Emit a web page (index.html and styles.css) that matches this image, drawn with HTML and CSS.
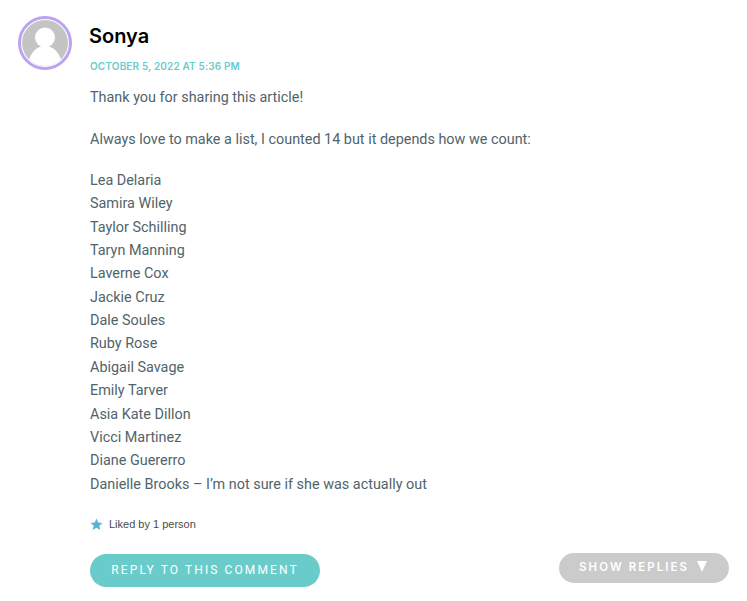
FILE: index.html
```html
<!DOCTYPE html>
<html lang="en">
<head>
<meta charset="utf-8">
<title>Comment</title>
<link rel="stylesheet" href="styles.css">
</head>
<body>
<article class="comment">
  <header class="head">
    <div class="avatar">
      <svg viewBox="0 0 46 46" width="46" height="46" aria-hidden="true">
        <circle cx="23" cy="23" r="23" fill="#c4c4c4"/>
        <circle cx="23" cy="17.5" r="10" fill="#fff"/>
        <path d="M7 39.5c3-8 8-13.5 16-13.5s13 5.500 16 13.500a23 23 0 0 1-32 0z" fill="#fff"/>
      </svg>
    </div>
    <div class="meta">
      <div class="name">Sonya</div>
      <div class="date">OCTOBER 5, 2022 AT 5:36 PM</div>
    </div>
  </header>
  <div class="body">
    <p>Thank you for sharing this article!</p>
    <p>Always love to make a list, I counted 14 but it depends how we count:</p>
    <p class="list">Lea Delaria<br>Samira Wiley<br>Taylor Schilling<br>Taryn Manning<br>Laverne Cox<br>Jackie Cruz<br>Dale Soules<br>Ruby Rose<br>Abigail Savage<br>Emily Tarver<br>Asia Kate Dillon<br>Vicci Martinez<br>Diane Guererro<br>Danielle Brooks – I’m not sure if she was actually out</p>
    <div class="likes">
      <svg viewBox="0 0 24 24" width="13" height="13" aria-hidden="true"><path d="M12 1l3.2 7.4 8 .7-6 5.3 1.8 7.900L12 18.100 5 22.300l1.800-7.900-6-5.300 8-.7z" fill="#5bb2d9"/></svg>
      <span>Liked by 1 person</span>
    </div>
    <div class="actions">
      <a class="reply">REPLY TO THIS COMMENT</a>
      <a class="show">SHOW REPLIES <span class="tri"></span></a>
    </div>
  </div>
</article>
</body>
</html>
```
FILE: styles.css
```css
* { box-sizing: border-box; }
html, body { margin: 0; padding: 0; background: #fff; }
body { width: 747px; height: 601px; overflow: hidden; font-family: Roboto, sans-serif; }
.comment { padding: 16px 18px 0 18px; }
.head { display: flex; align-items: flex-start; height: 54px; }
.avatar { width: 54px; height: 54px; border-radius: 50%; border: 3px solid #bca2f0; padding: 1px; flex: none; overflow: hidden; display: flex; }
.avatar svg { display: block; }
.meta { margin-left: 17px; }
.name { font-family: Inter, sans-serif; font-weight: 600; font-size: 20px; line-height: 24px; margin-top: 8px; color: #000; }
.date { font-family: Inter, sans-serif; font-weight: 600; font-size: 10px; line-height: 12px; margin-top: 12px; margin-left: 1px; color: #6accca; letter-spacing: .15px; }
.body { margin-left: 72px; margin-top: 16px; color: #51646a; font-size: 14.4px; line-height: 23.35px; }
.body p { margin: 0 0 18.2px; }
.likes { display: flex; align-items: center; gap: 6px; margin-top: 22px; height: 14px; font-family: "Liberation Sans", sans-serif; font-size: 11px; color: #4a4a4a; }
.actions { display: flex; justify-content: space-between; align-items: flex-start; margin-top: 22px; }
.reply { display: block; width: 230px; height: 33px; border-radius: 17px; background: #6accca; color: #fff; font-size: 12px; line-height: 33px; letter-spacing: 2.1px; text-align: center; }
.show { display: flex; align-items: center; justify-content: center; width: 170px; height: 30px; margin-top: -1px; padding-right: 2px; border-radius: 15px; background: #cbcbcb; color: #fff; font-family: Inter, sans-serif; font-weight: 600; font-size: 11.5px; letter-spacing: 2.05px; white-space: pre; }
.tri { display: block; width: 0; height: 0; margin-left: 3px; border-left: 5.5px solid transparent; border-right: 5.5px solid transparent; border-top: 11px solid #fff; margin-top: -2px; }
```
